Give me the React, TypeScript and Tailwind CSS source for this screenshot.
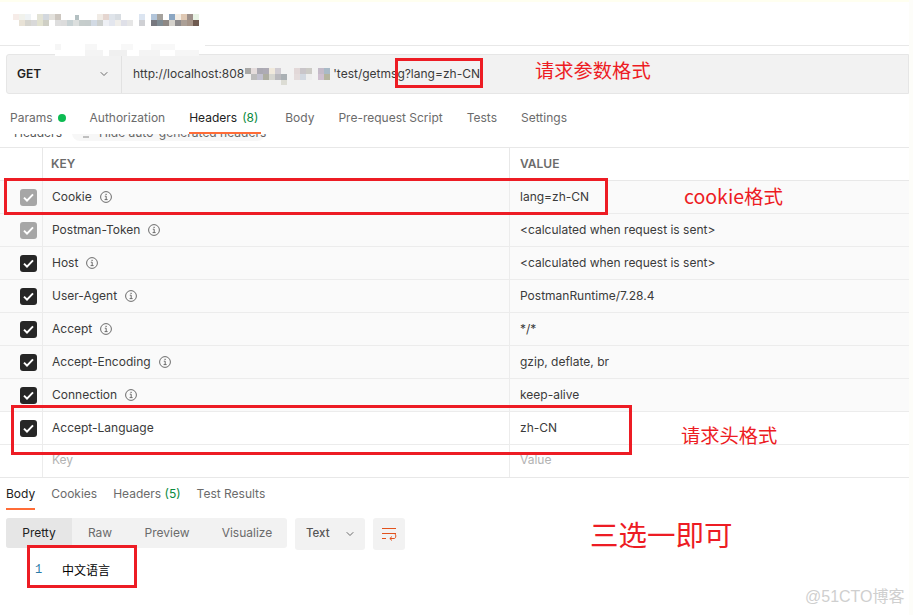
import { ChevronDown } from "lucide-react";

/* ------------------------------- data ------------------------------- */
const headerRows = [
  { key: "Cookie", value: "lang=zh-CN", muted: true, info: true },
  { key: "Postman-Token", value: "<calculated when request is sent>", muted: true, info: true },
  { key: "Host", value: "<calculated when request is sent>", info: true },
  { key: "User-Agent", value: "PostmanRuntime/7.28.4", info: true },
  { key: "Accept", value: "*/*", info: true },
  { key: "Accept-Encoding", value: "gzip, deflate, br", info: true },
  { key: "Connection", value: "keep-alive", info: true },
  { key: "Accept-Language", value: "zh-CN", white: true },
];

type Cell = [number, number, number, number, string];

// pixelated bits over the tab title
const titleMosaic: Cell[] = [
  [13, 14, 6, 6, "#f6ece8"], [19, 14, 6, 6, "#f1f2ec"], [25, 14, 6, 6, "#eff3f5"], [37, 14, 6, 6, "#e3e3d6"],
  [43, 14, 6, 6, "#d3d8de"], [49, 14, 6, 6, "#e3e1dc"], [55, 14, 6, 6, "#cdc7c0"], [75, 15, 4, 5, "#b4c0c2"],
  [97, 14, 6, 6, "#f1ece6"], [103, 14, 6, 6, "#e5d6d0"], [109, 14, 6, 6, "#dfe4ea"], [115, 14, 6, 6, "#d8dde2"],
  [139, 14, 6, 6, "#dce5f1"], [151, 14, 6, 6, "#b2c5da"], [157, 14, 6, 6, "#a5a29d"], [169, 14, 6, 6, "#8ba6c2"],
  [175, 14, 6, 6, "#f3ece2"], [181, 14, 6, 6, "#dfc8b3"], [187, 14, 6, 6, "#9d908a"], [193, 14, 6, 6, "#e8f2e4"],
  [19, 20, 6, 6, "#e8e2d6"], [25, 20, 6, 6, "#d6d5cf"], [31, 20, 6, 6, "#d9d9d9"], [37, 20, 6, 6, "#e2e2d0"],
  [43, 20, 6, 6, "#cfcfc5"], [55, 20, 6, 6, "#dedede"], [61, 20, 6, 6, "#dcdcdc"], [67, 20, 6, 6, "#c8d2d4"],
  [73, 20, 6, 6, "#dcdfde"], [79, 20, 6, 6, "#c6cdcc"], [85, 20, 6, 6, "#c5cccc"], [91, 20, 6, 6, "#d2dae4"],
  [97, 20, 6, 6, "#cdd0ce"], [103, 20, 6, 6, "#eef0f5"], [109, 20, 6, 6, "#e3e6ee"], [115, 20, 6, 6, "#f0eeea"],
  [121, 20, 6, 6, "#dfe0e8"], [127, 20, 6, 6, "#e6e6e6"], [139, 20, 6, 6, "#cfd0d4"], [151, 20, 6, 6, "#77787f"],
  [157, 20, 6, 6, "#7f8c94"], [163, 20, 6, 6, "#8e8884"], [169, 20, 6, 6, "#d5d2cc"], [175, 20, 6, 6, "#8c8a8c"],
  [181, 20, 6, 6, "#ab9f96"], [187, 20, 6, 6, "#a59488"], [193, 20, 6, 6, "#6f5a50"],
];

const urlMosaic: Cell[] = [
  [0, 6, 6, 6, "#a9a8a6"], [6, 6, 6, 6, "#e4dcdc"], [12, 6, 6, 6, "#aba9b2"], [18, 6, 6, 6, "#aeabb5"],
  [24, 6, 6, 6, "#f0e9dc"], [30, 6, 6, 6, "#d0ccd2"], [49, 6, 6, 6, "#e2d8d8"], [55, 6, 6, 6, "#c9c5c9"],
  [61, 6, 6, 6, "#cccbc6"], [73, 6, 6, 6, "#c4bac8"], [79, 6, 6, 6, "#a9bac7"],
  [6, 12, 6, 6, "#bcbcbc"], [12, 12, 6, 6, "#c2c1cf"], [18, 12, 6, 6, "#aeaea2"], [24, 12, 6, 6, "#d6d6d0"],
  [30, 12, 6, 6, "#b9b9bd"], [36, 12, 6, 6, "#aab0b4"], [49, 12, 6, 6, "#e4dcdc"], [55, 12, 6, 6, "#d2d8e0"],
  [61, 12, 6, 6, "#eeeeee"], [73, 12, 6, 6, "#cfc0d0"], [79, 12, 6, 6, "#b5b5a0"], [36, 18, 6, 5, "#dcdcd4"],
];

// the second blur, it wipes the line under the title and the top of the url bar
const wipeMosaic: Cell[] = [
  [0, 0, 165, 4, "#ffffff"], [15, 10, 144, 2, "#ffffff"],
  [15, 0, 6, 6, "#f6f6f6"], [45, 0, 12, 6, "#f7f7f7"], [81, 0, 12, 6, "#f8f8f8"], [111, 0, 24, 6, "#f8f8f8"],
  [45, 6, 18, 6, "#f4f4f4"], [69, 6, 18, 6, "#f0f0f0"], [99, 6, 21, 6, "#f4f4f4"], [135, 6, 24, 6, "#f6f6f6"],
];

/* ----------------------------- small bits ---------------------------- */
function InfoIcon() {
  return (
    <svg width="12" height="12" viewBox="0 0 12 12" fill="none" className="ml-[8px] shrink-0">
      <circle cx="6" cy="6" r="5.4" stroke="#6b6b6b" />
      <path d="M4.8 5.2H6.2V8.6M4.6 8.6H7.6" stroke="#6b6b6b" />
      <rect x="5.5" y="2.8" width="1.2" height="1.2" fill="#6b6b6b" />
    </svg>
  );
}

function Checkbox({ muted }: { muted?: boolean }) {
  return (
    <span
      className={`flex h-[17px] w-[17px] items-center justify-center rounded-[3px] ${
        muted ? "bg-[#a6a6a6]" : "bg-[#262626]"
      }`}
    >
      <svg width="11" height="9" viewBox="0 0 11 9" fill="none">
        <path d="M1 4.6L4 7.6L10 1.4" stroke="white" strokeWidth="2" />
      </svg>
    </span>
  );
}

function WrapIcon() {
  return (
    <svg width="16" height="14" viewBox="0 0 16 14" fill="none">
      <path d="M1 1.5H15M1 6.5H15M1 11.5H5" stroke="#e2521d" />
      <path d="M9 11.5H13.2C15.4 11.5 15.4 6.5 13 6.5M11 9.5L8.8 11.5L11 13.5" stroke="#e2521d" />
    </svg>
  );
}

function Mosaic({ cells, width, height, className }: { cells: Cell[]; width: number; height: number; className?: string }) {
  return (
    <svg width={width} height={height} viewBox={`0 0 ${width} ${height}`} shapeRendering="crispEdges" className={className}>
      {cells.map(([x, y, w, h, fill], i) => (
        <rect key={i} x={x} y={y} width={w} height={h} fill={fill} />
      ))}
    </svg>
  );
}

function RedBox({ className }: { className: string }) {
  return <div className={`absolute border-[3px] border-[#ed1c24] ${className}`} />;
}

const cjkStack = '"Noto Sans CJK SC", "Noto Sans", sans-serif';

function Note({ className, children }: { className: string; children: React.ReactNode }) {
  return (
    <div className={`absolute whitespace-nowrap text-[#ed1c24] ${className}`} style={{ fontFamily: cjkStack }}>
      {children}
    </div>
  );
}

/* -------------------------------- page ------------------------------- */
export default function App() {
  return (
    <div className="relative h-[615px] w-[913px] overflow-hidden bg-[#fdfdf9] font-['Inter',sans-serif] text-[12px]">
      <div className="h-[615px] w-[909px] bg-white">
        <div className="h-[2px] bg-[#fffff0]" />

        {/* title bar */}
        <div className="flex h-[44px] items-start border-b border-[#e8e8e8]">
          <Mosaic cells={titleMosaic} width={210} height={30} className="-mt-[2px]" />
        </div>

        {/* url bar */}
        <div className="mx-[6px] mt-[8px] flex h-[40px] w-[903px] items-center rounded-l-[3px] border border-[#e6e6e6] bg-[#f2f2f2]">
          <div className="flex h-full w-[115px] items-center justify-between border-r border-[#e2e2e2] pl-[10px] pr-[11px]">
            <span className="font-semibold text-[#212121]">GET</span>
            <ChevronDown size={12} color="#6b6b6b" />
          </div>
          <div className="flex items-center pl-[11px] text-[#3b3b3b]">
            <span>http://localhost:808</span>
            <Mosaic cells={urlMosaic} width={88} height={24} className="ml-[1px]" />
            <span>'test/getmsg?lang=zh-CN</span>
          </div>
        </div>

        {/* request tabs */}
        <div className="flex h-[40px] items-start pl-[10px] pt-[16px] text-[#6b6b6b]">
          <span className="leading-[16px]">Params</span>
          <span className="ml-[5px] mt-[4px] h-[8px] w-[8px] rounded-full bg-[#0cbb52]" />
          <span className="ml-[24px] leading-[16px]">Authorization</span>
          <div className="ml-[24px] flex h-[24px] w-[72px] items-start border-b-2 border-[#ff6c37]">
            <span className="leading-[16px] text-[#212121]">Headers</span>
            <span className="ml-[5px] leading-[16px] text-[#0a8a3e]">(8)</span>
          </div>
          <span className="ml-[24px] leading-[16px]">Body</span>
          <span className="ml-[24px] leading-[16px]">Pre-request Script</span>
          <span className="ml-[24px] leading-[16px]">Tests</span>
          <span className="ml-[24px] leading-[16px]">Settings</span>
        </div>

        {/* scrolled-away strip, only its lower part still shows */}
        <div className="flex h-[14px] items-start overflow-hidden border-b border-[#e8e8e8]">
          <div className="-mt-[9px] flex h-[16px] items-center whitespace-nowrap pl-[14px] text-[#555]">
            <span>Headers</span>
            <span className="ml-[10px] flex h-[16px] w-[193px] items-center rounded-b-[8px] bg-[#f7f7f7] pl-[10px] text-[#666]">
              <svg width="10" height="12" viewBox="0 0 10 12" fill="none" className="mr-[7px] shrink-0">
                <path d="M1 10L7 10" stroke="#888" />
              </svg>
              Hide auto-generated headers
            </span>
          </div>
        </div>

        {/* headers table */}
        <div className="grid h-[33px] grid-cols-[43px_467px_1fr] border-b border-[#e8e8e8] font-semibold text-[#6b6b6b]">
          <div className="border-r border-[#e8e8e8]" />
          <div className="flex items-center border-r border-[#e8e8e8] pl-[8px]">KEY</div>
          <div className="flex items-center pl-[10px]">VALUE</div>
        </div>

        {headerRows.map((row) => (
          <div
            key={row.key}
            className={`grid h-[33px] grid-cols-[43px_467px_1fr] border-b border-[#ececec] text-[#3b3b3b] ${
              row.white ? "bg-white" : "bg-[#fafafa]"
            }`}
          >
            <div className="flex items-center justify-center border-r border-[#ececec] pl-[15px]">
              <Checkbox muted={row.muted} />
            </div>
            <div className="flex items-center border-r border-[#ececec] pl-[9px]">
              <span>{row.key}</span>
              {row.info && <InfoIcon />}
            </div>
            <div className="flex items-center pl-[10px]">{row.value}</div>
          </div>
        ))}

        <div className="grid h-[33px] grid-cols-[43px_467px_1fr] border-b border-[#e8e8e8] text-[#b3b3b3]">
          <div className="border-r border-[#ececec]" />
          <div className="flex items-center border-r border-[#ececec] pb-[2px] pl-[9px]">Key</div>
          <div className="flex items-center pb-[2px] pl-[10px]">Value</div>
        </div>

        {/* response tabs */}
        <div className="flex h-[32px] items-start gap-[16px] pl-[6px] pt-[8px] text-[#6b6b6b]">
          <div className="h-[24px] border-b-2 border-[#ff6c37] leading-[16px] text-[#212121]">Body</div>
          <span className="leading-[16px]">Cookies</span>
          <span className="leading-[16px]">
            Headers <span className="text-[#0a8a3e]">(5)</span>
          </span>
          <span className="leading-[16px]">Test Results</span>
        </div>

        {/* response toolbar */}
        <div className="ml-[6px] mt-[8px] flex items-start text-[#6b6b6b]">
          <div className="flex h-[30px] w-[281px] items-center overflow-hidden rounded-[3px] bg-[#f2f2f2]">
            <span className="flex h-full w-[66px] items-center justify-center bg-[#e6e6e6] text-[#212121]">Pretty</span>
            <span className="flex w-[56px] justify-center">Raw</span>
            <span className="ml-[8px] flex w-[62px] justify-center">Preview</span>
            <span className="ml-[21px] flex w-[56px] justify-center">Visualize</span>
          </div>
          <div className="ml-[8px] flex h-[32px] w-[70px] items-center justify-between rounded-[3px] bg-[#f2f2f2] pl-[11px] pr-[9px]">
            <span className="text-[11.5px] font-medium text-[#555]">Text</span>
            <ChevronDown size={12} color="#6b6b6b" />
          </div>
          <div className="ml-[8px] flex h-[32px] w-[32px] items-center justify-center rounded-[3px] bg-[#f2f2f2]">
            <WrapIcon />
          </div>
        </div>

        {/* response body */}
        <div className="flex items-center pl-[35px] pt-[11px]">
          <span className="w-[27px] font-['Liberation_Mono',monospace] text-[#2a7ba8]">1</span>
          <span className="text-black" style={{ fontFamily: cjkStack }}>中文语言</span>
        </div>
      </div>

      {/* blur laid over the title line */}
      <Mosaic cells={wipeMosaic} width={165} height={12} className="absolute left-[40px] top-[44px]" />

      {/* hand-drawn annotations on top of the screenshot */}
      <RedBox className="left-[395px] top-[58px] h-[30px] w-[88px]" />
      <RedBox className="left-[4px] top-[178px] h-[37px] w-[604px]" />
      <RedBox className="left-[11px] top-[405px] h-[50px] w-[621px]" />
      <RedBox className="left-[27px] top-[545px] h-[43px] w-[110px]" />

      <Note className="left-[535px] top-[56px] text-[19.3px] leading-[28px]">请求参数格式</Note>
      <Note className="left-[684px] top-[182px] text-[19.5px] leading-[28px]">cookie格式</Note>
      <Note className="left-[681px] top-[421px] text-[19.3px] leading-[28px]">请求头格式</Note>
      <Note className="left-[590px] top-[514px] text-[28.5px] leading-[40px]">三选一即可</Note>
      <div
        className="absolute left-[805px] top-[587px] whitespace-nowrap text-[16px] leading-[20px] text-[#cfcfcf]"
        style={{ fontFamily: '"Liberation Sans", "Noto Sans CJK SC", sans-serif' }}
      >
        @51CTO博客
      </div>
    </div>
  );
}
